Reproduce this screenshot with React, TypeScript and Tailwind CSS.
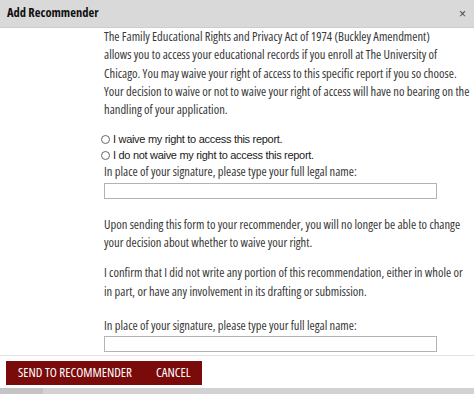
import React from "react";

function Radio({ label }: { label: string }) {
  return (
    <label className="flex h-4 items-center gap-[3px] font-['Liberation_Sans',Arial,sans-serif] text-[11px] tracking-[-0.3px] text-[#1a1a1a]">
      <span className="ml-[-3px] h-[9px] w-[9px] shrink-0 rounded-full border border-[#666] bg-white" />
      <span>{label}</span>
    </label>
  );
}

function NameField() {
  return (
    <div>
      <p>In place of your signature, please type your full legal name:</p>
      <div className="mt-px h-4 w-[333px] border border-[#b3b3b3] bg-white" />
    </div>
  );
}

export default function App() {
  return (
    <div className="flex h-[394px] w-[474px] flex-col overflow-hidden bg-white">
      <div className="flex h-7 shrink-0 items-center justify-between border-b border-[#cdcdcd] bg-[#d9d9d9] pl-[7px] pr-[8px]">
        <h1 className="font-['Open_Sans',sans-serif] text-[12.5px] font-bold font-stretch-condensed text-[#111]">
          Add Recommender
        </h1>
        <span className="font-['Liberation_Sans',sans-serif] text-[12px] text-[#444]">×</span>
      </div>

      <div className="flex-1 whitespace-nowrap pl-[104px] font-['Open_Sans',sans-serif] text-[12.5px] leading-[18.3px] font-stretch-condensed text-[#383838]">
        <p>
          The Family Educational Rights and Privacy Act of 1974 (Buckley Amendment)
          <br />
          allows you to access your educational records if you enroll at The University of
          <br />
          Chicago. You may waive your right of access to this specific report if you so choose.
          <br />
          Your decision to waive or not to waive your right of access will have no bearing on the
          <br />
          handling of your application.
        </p>
        <div className="mt-3 flex flex-col">
          <Radio label="I waive my right to access this report." />
          <Radio label="I do not waive my right to access this report." />
        </div>
        <NameField />
        <p className="mt-[17px]">
          Upon sending this form to your recommender, you will no longer be able to change
          <br />
          your decision about whether to waive your right.
        </p>
        <p className="mt-3">
          I confirm that I did not write any portion of this recommendation, either in whole or
          <br />
          in part, or have any involvement in its drafting or submission.
        </p>
        <div className="mt-4">
          <NameField />
        </div>
      </div>

      <div className="flex h-[33px] shrink-0 items-start border-t border-[#e3e3e3] bg-white pl-[6px] pt-[5px]">
        <div className="flex h-6 bg-[#7b0a0a] font-['Open_Sans',sans-serif] text-[13px] font-stretch-condensed text-white">
          <button className="px-3">SEND TO RECOMMENDER</button>
          <button className="px-3">CANCEL</button>
        </div>
      </div>
      <div className="flex h-[6px] shrink-0 bg-[#d2d2d2]">
        <div className="w-[43px] bg-[#c4c4c4]" />
      </div>
    </div>
  );
}
